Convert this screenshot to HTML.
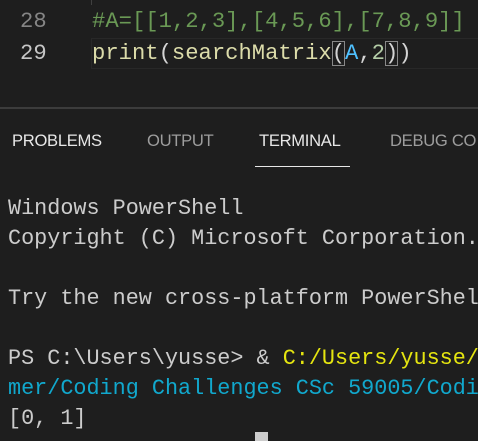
<!DOCTYPE html><html><head><style>
html,body{margin:0;width:478px;height:441px;overflow:hidden}
body{background:#1e1e1e;position:relative;font-family:"Liberation Mono",monospace}
.a{position:absolute;white-space:pre;font-size:21.8px;line-height:30px}
.c{font-size:22.2px}
.t{position:absolute;font-family:"Liberation Sans",sans-serif;font-size:16.6px;top:131px;letter-spacing:-0.3px;white-space:nowrap}
</style></head><body>
<div style="position:absolute;left:91px;top:0;width:1px;height:5px;background:#404040"></div>
<div style="position:absolute;left:91px;top:38px;width:387px;height:29px;border:1px solid #282828;border-right:none"></div>
<div class="a c" style="left:20px;top:7px;color:#858585">28</div>
<div class="a c" style="left:20px;top:39px;color:#c6c6c6">29</div>
<div class="a c" style="left:92px;top:7px;color:#6a9955">#A=[[1,2,3],[4,5,6],[7,8,9]]</div>
<div class="a c" style="left:92px;top:39px;color:#dcdcaa">print<span style="color:#d4d4d4">(</span>searchMatrix<span style="color:#d4d4d4;outline:1px solid #888;outline-offset:-1px">(</span><span style="color:#4fc1ff">A</span><span style="color:#d4d4d4">,</span><span style="color:#b5cea8">2</span><span style="color:#d4d4d4;outline:1px solid #888;outline-offset:-1px">)</span><span style="color:#d4d4d4">)</span></div>
<div style="position:absolute;left:0;top:107px;width:478px;height:2px;background:#3c3c3c"></div>
<div class="t" style="left:12px;color:#e7e7e7">PROBLEMS</div>
<div class="t" style="left:147px;color:#9d9d9d">OUTPUT</div>
<div class="t" style="left:259px;color:#e7e7e7">TERMINAL</div>
<div class="t" style="left:390px;color:#9d9d9d">DEBUG CO</div>
<div style="position:absolute;left:255px;top:166px;width:95px;height:1px;background:#e7e7e7"></div>
<div class="a" style="left:8px;top:194px;color:#cccccc;width:470px;overflow:hidden">Windows PowerShell
Copyright (C) Microsoft Corporation.

Try the new cross-platform PowerShel

PS C:\Users\yusse&gt; &amp; <span style="color:#e5e510">C:/Users/yusse/</span>
<span style="color:#11a8cd">mer/Coding Challenges CSc 59005/Codi</span>
[0, 1]
<span style="position:relative;top:6px">PS C:\Users\yusse&gt;</span></div>
<div style="position:absolute;left:255px;top:432px;width:13px;height:9px;background:#cccccc"></div>
</body></html>
